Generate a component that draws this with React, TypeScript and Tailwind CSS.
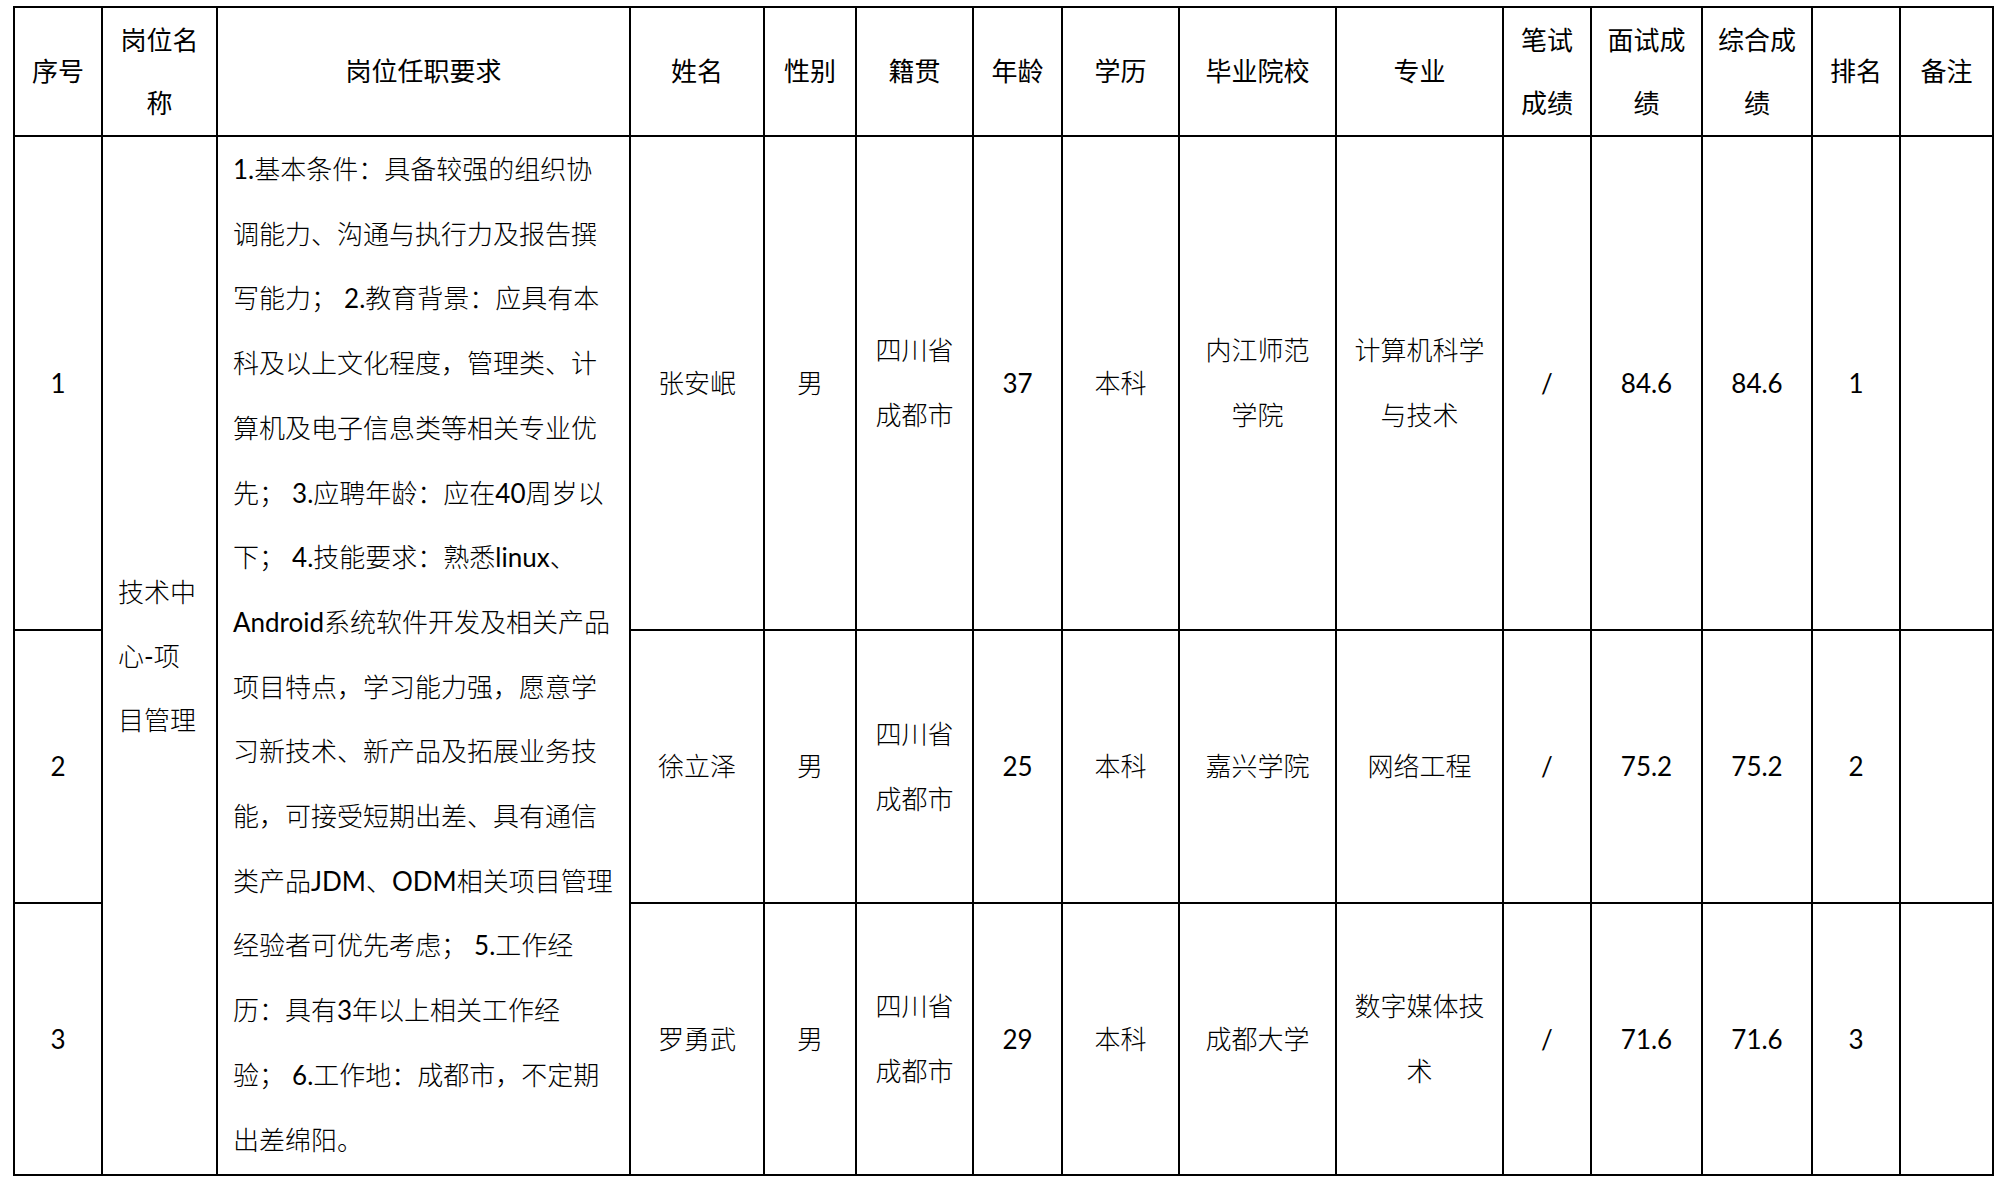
import React from "react";

const F = "font-['Lato','Noto_Sans_CJK_SC',sans-serif]";

function Cell({
  children,
  className = "",
}: {
  children?: React.ReactNode;
  className?: string;
}) {
  return (
    <div
      className={
        "bg-white flex items-center justify-center text-center text-[26px] leading-[65px] text-black " +
        className
      }
    >
      <div>{children}</div>
    </div>
  );
}

function H({ children }: { children: React.ReactNode }) {
  return (
    <div className="bg-white flex items-center justify-center text-center text-[26px] leading-[63px] text-black">
      <div>{children}</div>
    </div>
  );
}

const reqLines = [
  "1.基本条件：具备较强的组织协",
  "调能力、沟通与执行力及报告撰",
  "写能力； 2.教育背景：应具有本",
  "科及以上文化程度，管理类、计",
  "算机及电子信息类等相关专业优",
  "先； 3.应聘年龄：应在40周岁以",
  "下； 4.技能要求：熟悉linux、",
  "Android系统软件开发及相关产品",
  "项目特点，学习能力强，愿意学",
  "习新技术、新产品及拓展业务技",
  "能，可接受短期出差、具有通信",
  "类产品JDM、ODM相关项目管理",
  "经验者可优先考虑； 5.工作经",
  "历：具有3年以上相关工作经",
  "验； 6.工作地：成都市，不定期",
  "出差绵阳。",
];

type Row = {
  no: string;
  name: string;
  sex: string;
  origin: string[];
  age: string;
  edu: string;
  school: string[];
  major: string[];
  written: string;
  interview: string;
  total: string;
  rank: string;
};

const rows: Row[] = [
  {
    no: "1",
    name: "张安岷",
    sex: "男",
    origin: ["四川省", "成都市"],
    age: "37",
    edu: "本科",
    school: ["内江师范", "学院"],
    major: ["计算机科学", "与技术"],
    written: "/",
    interview: "84.6",
    total: "84.6",
    rank: "1",
  },
  {
    no: "2",
    name: "徐立泽",
    sex: "男",
    origin: ["四川省", "成都市"],
    age: "25",
    edu: "本科",
    school: ["嘉兴学院"],
    major: ["网络工程"],
    written: "/",
    interview: "75.2",
    total: "75.2",
    rank: "2",
  },
  {
    no: "3",
    name: "罗勇武",
    sex: "男",
    origin: ["四川省", "成都市"],
    age: "29",
    edu: "本科",
    school: ["成都大学"],
    major: ["数字媒体技", "术"],
    written: "/",
    interview: "71.6",
    total: "71.6",
    rank: "3",
  },
];

function Lines({ items }: { items: string[] }) {
  return (
    <>
      {items.map((t, i) => (
        <div key={i} className="whitespace-nowrap">
          {t}
        </div>
      ))}
    </>
  );
}

function Mixed({ text }: { text: string }) {
  const parts = text.split(/([A-Za-z0-9.]+)/);
  return (
    <div className="whitespace-nowrap">
      {parts.map((p, i) =>
        /^[A-Za-z0-9.]+$/.test(p) ? (
          <span key={i} className="font-normal">
            {p}
          </span>
        ) : (
          <span key={i}>{p}</span>
        )
      )}
    </div>
  );
}

export default function App() {
  return (
    <div className={"w-[2000px] h-[1184px] bg-white " + F}>
      <div className="pt-[6px] pl-[13px]">
        <div className="inline-grid bg-black p-[2px] gap-[2px] grid-cols-[86px_113px_411px_132px_90px_115px_87px_115px_155px_165px_86px_109px_108px_86px_91px] grid-rows-[127px_492px_271px_270px]">
          <H>序号</H>
          <H>
            <div>岗位名</div>
            <div>称</div>
          </H>
          <H>岗位任职要求</H>
          <H>姓名</H>
          <H>性别</H>
          <H>籍贯</H>
          <H>年龄</H>
          <H>学历</H>
          <H>毕业院校</H>
          <H>专业</H>
          <H>
            <div>笔试</div>
            <div>成绩</div>
          </H>
          <H>
            <div>面试成</div>
            <div>绩</div>
          </H>
          <H>
            <div>综合成</div>
            <div>绩</div>
          </H>
          <H>排名</H>
          <H>备注</H>

          {rows.map((r, idx) => (
            <React.Fragment key={r.no}>
              <Cell>{r.no}</Cell>
              {idx === 0 && (
                <>
                  <div className="row-span-3 bg-white flex items-center pl-[15px] text-[26px] leading-[64px] text-black font-light">
                    <div>
                      <div>技术中</div>
                      <div>
                        心<span className="font-normal">-</span>项
                      </div>
                      <div>目管理</div>
                    </div>
                  </div>
                  <div className="row-span-3 bg-white pl-[15px] text-[26px] leading-[64.7px] text-black font-light overflow-hidden">
                    {reqLines.map((t, i) => (
                      <Mixed key={i} text={t} />
                    ))}
                  </div>
                </>
              )}
              <Cell className="font-light">{r.name}</Cell>
              <Cell className="font-light">{r.sex}</Cell>
              <Cell className="font-light">
                <Lines items={r.origin} />
              </Cell>
              <Cell>{r.age}</Cell>
              <Cell className="font-light">{r.edu}</Cell>
              <Cell className="font-light">
                <Lines items={r.school} />
              </Cell>
              <Cell className="font-light">
                <Lines items={r.major} />
              </Cell>
              <Cell>{r.written}</Cell>
              <Cell>{r.interview}</Cell>
              <Cell>{r.total}</Cell>
              <Cell>{r.rank}</Cell>
              <Cell />
            </React.Fragment>
          ))}
        </div>
      </div>
    </div>
  );
}
